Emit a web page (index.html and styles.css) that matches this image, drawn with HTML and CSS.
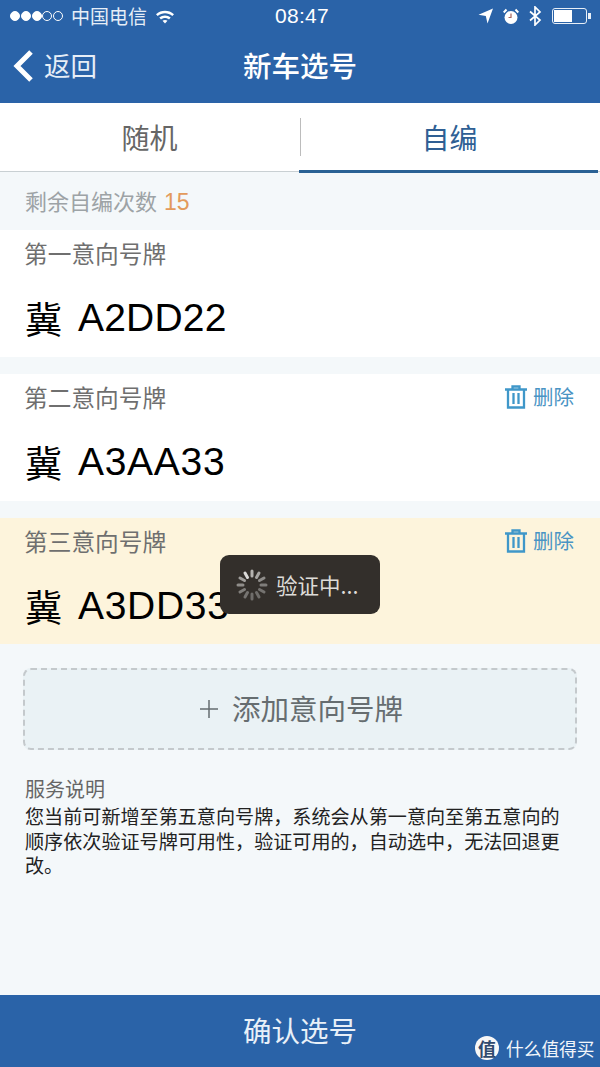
FILE: index.html
```html
<!DOCTYPE html>
<html lang="zh-CN">
<head>
  <meta charset="UTF-8">
  <title>新车选号</title>
  <link rel="stylesheet" href="styles.css">
</head>
<body>
  <div class="page">
    <div class="header">
      <div class="status-bar">
        <div class="status-left">
          <span class="dot"></span><span class="dot"></span><span class="dot"></span>
          <span class="dot off"></span><span class="dot off"></span>
          <span class="carrier">中国电信</span>
          <svg class="wifi" width="20" height="15" viewBox="0 0 20 15">
            <path d="M1 5.2C6 .6 14 .6 19 5.2L17.3 7C13 3.2 7 3.2 2.7 7Z" fill="#fff"/>
            <path d="M4.3 8.6C7.5 5.8 12.5 5.8 15.7 8.6L14 10.4C11.7 8.4 8.3 8.4 6 10.4Z" fill="#fff"/>
            <path d="M7.5 11.7C8.9 10.6 11.1 10.6 12.5 11.7L10 14.4Z" fill="#fff"/>
          </svg>
        </div>
        <div class="status-time">08:47</div>
        <div class="status-right">
          <svg width="15" height="16" viewBox="0 0 15 16"><path d="M15 .5 9.5 15.5 7.8 8 .5 6.7Z" fill="#fff"/></svg>
          <svg width="16" height="17" viewBox="0 0 16 17">
            <circle cx="8" cy="9.500" r="6.500" fill="#fff"/>
            <path d="M.7 4.500 3.500 1.500M15.300 4.500 12.500 1.500" stroke="#fff" stroke-width="2"/>
            <path d="M8 5.500V9.500H5.500" stroke="#a8645c" stroke-width="1.200" fill="none"/>
          </svg>
          <svg width="13" height="20" viewBox="0 0 13 20"><path d="M1 5.500 11 14 6 19V1L11 6 1 14.500" stroke="#fff" stroke-width="1.700" fill="none"/></svg>
          <div class="battery"><div class="battery-level"></div></div>
        </div>
      </div>
      <div class="nav">
        <div class="back">
          <svg width="22" height="34" viewBox="0 0 22 34"><path d="M19 3 5 17 19 31" stroke="#fff" stroke-width="5" fill="none"/></svg>
          <span>返回</span>
        </div>
        <div class="nav-title">新车选号</div>
      </div>
    </div>

    <div class="tabs">
      <div class="tab">随机</div>
      <div class="tab active">自编</div>
    </div>

    <div class="main">
      <div class="remain">剩余自编次数 <span class="remain-num">15</span></div>

      <div class="plate-card first">
        <div class="plate-top"><span>第一意向号牌</span></div>
        <div class="plate-no"><span class="prov">冀</span>A2DD22</div>
      </div>

      <div class="plate-card">
        <div class="plate-top">
          <span>第二意向号牌</span>
          <div class="del">
            <svg width="22" height="24" viewBox="0 0 22 24"><path d="M0 4.500H22M7.500 4.500V1.500H14.500V4.500M3 4.500V22.500H19V4.500M8.500 8V19M13.500 8V19" stroke="#3f97c9" stroke-width="2.300" fill="none"/></svg>
            <span>删除</span>
          </div>
        </div>
        <div class="plate-no"><span class="prov">冀</span>A3AA33</div>
      </div>

      <div class="plate-card warn">
        <div class="plate-top">
          <span>第三意向号牌</span>
          <div class="del">
            <svg width="22" height="24" viewBox="0 0 22 24"><path d="M0 4.500H22M7.500 4.500V1.500H14.500V4.500M3 4.500V22.500H19V4.500M8.500 8V19M13.500 8V19" stroke="#3f97c9" stroke-width="2.300" fill="none"/></svg>
            <span>删除</span>
          </div>
        </div>
        <div class="plate-no"><span class="prov">冀</span>A3DD33</div>
      </div>

      <div class="add-btn">
        <svg class="plus" width="18" height="18" viewBox="0 0 18 18"><path d="M0 9H18M9 0V18" stroke="#666d70" stroke-width="1.500"/></svg>
        <span>添加意向号牌</span>
      </div>

      <div class="notes">
        <div class="notes-title">服务说明</div>
        <p>您当前可新增至第五意向号牌，系统会从第一意向至第五意向的顺序依次验证号牌可用性，验证可用的，自动选中，无法回退更改。</p>
      </div>
    </div>

    <div class="footer">确认选号</div>

    <div class="toast">
      <svg width="34" height="34" viewBox="0 0 34 34">
        <g stroke-width="3" stroke-linecap="round">
          <path d="M17 3V8" stroke="#b5b3b0"/>
          <path d="M24 5 21.500 9.500" stroke="#a8a6a3"/>
          <path d="M29 10 24.500 12.500" stroke="#8f8d8a"/>
          <path d="M31 17H26" stroke="#7f7d7a"/>
          <path d="M29 24 24.500 21.500" stroke="#757370"/>
          <path d="M24 29 21.500 24.500" stroke="#6f6d6a"/>
          <path d="M17 31V26" stroke="#6f6d6a"/>
          <path d="M10 29 12.500 24.500" stroke="#757370"/>
          <path d="M5 24 9.500 21.500" stroke="#807e7b"/>
          <path d="M3 17H8" stroke="#8f8d8a"/>
          <path d="M5 10 9.500 12.500" stroke="#a09e9b"/>
          <path d="M10 5 12.500 9.500" stroke="#dbdad8"/>
        </g>
      </svg>
      <span>验证中...</span>
    </div>

    <div class="watermark">
      <span class="wm-logo">值</span>
      <span>什么值得买</span>
    </div>
  </div>
</body>
</html>
```

FILE: styles.css
```css
* {
  box-sizing: border-box;
}

body {
  margin: 0;
  font-family: "Noto Sans CJK SC", "Liberation Sans", sans-serif;
}

.page {
  position: relative;
  display: flex;
  flex-direction: column;
  width: 600px;
  height: 1067px;
  overflow: hidden;
  background-color: #f4f8fa;
}

.header {
  height: 103px;
  background-color: #2a63a8;
  color: #fff;
}

.status-bar {
  display: flex;
  align-items: center;
  justify-content: space-between;
  height: 34px;
  padding: 0 13px 2px 10px;
}

.status-left {
  display: flex;
  align-items: center;
  width: 207px;
}

.dot {
  width: 10px;
  height: 10px;
  margin-right: 0.800px;
  border: 1px solid #fff;
  border-radius: 50%;
  background-color: #fff;
}

.dot.off {
  background-color: transparent;
}

.carrier {
  margin-left: 7px;
  font-size: 19px;
  line-height: 24px;
  color: #e6eef7;
}

.wifi {
  margin-left: 8px;
}

.status-time {
  font-family: "Liberation Sans", sans-serif;
  font-size: 21px;
  letter-spacing: 0.300px;
}

.status-right {
  display: flex;
  align-items: center;
  justify-content: flex-end;
  gap: 10px;
  width: 200px;
}

.battery {
  position: relative;
  width: 35px;
  height: 16px;
  padding: 1px;
  border: 1px solid #e8eff7;
  border-radius: 3px;
}

.battery::after {
  content: "";
  position: absolute;
  top: 4px;
  right: -5px;
  width: 3px;
  height: 6px;
  background-color: #e8eff7;
}

.battery-level {
  width: 18px;
  height: 100%;
  background-color: #fff;
}

.nav {
  position: relative;
  display: flex;
  align-items: center;
  justify-content: center;
  height: 69px;
}

.back {
  position: absolute;
  top: 14px;
  left: 12px;
  display: flex;
  align-items: center;
  gap: 10px;
  font-size: 26.500px;
  line-height: 38px;
  color: #e6eef7;
}

.back span {
  margin-top: -2px;
}

.nav-title {
  margin-bottom: 7px;
  font-size: 28.500px;
  font-weight: 500;
  line-height: 40px;
}

.tabs {
  display: flex;
  height: 69px;
  background-color: #fff;
  border-bottom: 1px solid #c9d0d3;
}

.tab {
  width: 299px;
  height: 69px;
  font-size: 28px;
  line-height: 69px;
  text-align: center;
  color: #666;
}

.tab.active {
  position: relative;
  height: 70px;
  padding-left: 2px;
  color: #2f5f94;
  border-bottom: 3px solid #2a6194;
}

.tab.active::before {
  content: "";
  position: absolute;
  top: 15px;
  left: 1px;
  width: 1px;
  height: 38px;
  background-color: #bcbcbc;
}

.main {
  flex: 1;
}

.remain {
  height: 58px;
  padding-left: 25px;
  font-size: 22px;
  line-height: 56px;
  color: #9da3a6;
}

.remain-num {
  margin-left: 2px;
  font-family: "Liberation Sans", sans-serif;
  font-size: 23px;
  color: #e39a5c;
}

.plate-card {
  height: 127px;
  margin-top: 17px;
  background-color: #fff;
}

.plate-card.first {
  margin-top: 0;
}

.plate-card.warn {
  height: 126px;
  background-color: #fdf4dc;
}

.plate-top {
  display: flex;
  align-items: center;
  justify-content: space-between;
  height: 50px;
  padding: 0 26px 4px 24px;
  font-size: 23.700px;
  color: #6f6f6f;
}

.del {
  display: flex;
  align-items: center;
  gap: 6px;
  font-size: 20.500px;
  color: #4a94c4;
}

.del span {
  margin-top: -2px;
}

.plate-no {
  display: flex;
  align-items: center;
  height: 76px;
  padding-left: 25px;
  font-family: "Liberation Sans", sans-serif;
  font-size: 39px;
  letter-spacing: 0.700px;
  color: #000;
}

.first .plate-no {
  letter-spacing: 0.200px;
}

.prov {
  margin-right: 16px;
  font-family: "Noto Sans CJK SC", sans-serif;
  font-size: 37px;
  letter-spacing: 0;
}

.add-btn {
  display: flex;
  align-items: center;
  justify-content: center;
  gap: 14px;
  height: 82px;
  margin: 24px 23px 0 23px;
  padding: 0 0 4px 3px;
  border: 2px dashed #c4c9cc;
  border-radius: 8px;
  background-color: #eaf2f5;
  font-size: 28.500px;
  color: #666d70;
}

.plus {
  margin-top: 3px;
}

.notes {
  margin-top: 24px;
  padding: 0 25px;
}

.notes-title {
  font-size: 20px;
  line-height: 30px;
  color: #666;
}

.notes p {
  margin: 0;
  font-size: 19.100px;
  line-height: 24.500px;
  color: #222;
}

.footer {
  height: 72px;
  background-color: #2a63a8;
  font-size: 28.500px;
  line-height: 70px;
  text-align: center;
  color: #e8f0f8;
}

.toast {
  position: absolute;
  top: 555px;
  left: 220px;
  display: flex;
  align-items: center;
  gap: 7px;
  width: 160px;
  height: 59px;
  padding-left: 15px;
  border-radius: 9px;
  background-color: #332f2b;
  font-size: 21.500px;
  color: #dedcd8;
}

.watermark {
  position: absolute;
  top: 1035px;
  left: 475px;
  display: flex;
  align-items: center;
  gap: 7px;
  font-size: 17.700px;
  line-height: 26px;
  color: #f2f6fb;
}

.wm-logo {
  width: 24px;
  height: 24px;
  border-radius: 50%;
  background-color: #f7f7f7;
  font-size: 18px;
  font-weight: 700;
  line-height: 24px;
  text-align: center;
  color: #2f4a6d;
}
```
